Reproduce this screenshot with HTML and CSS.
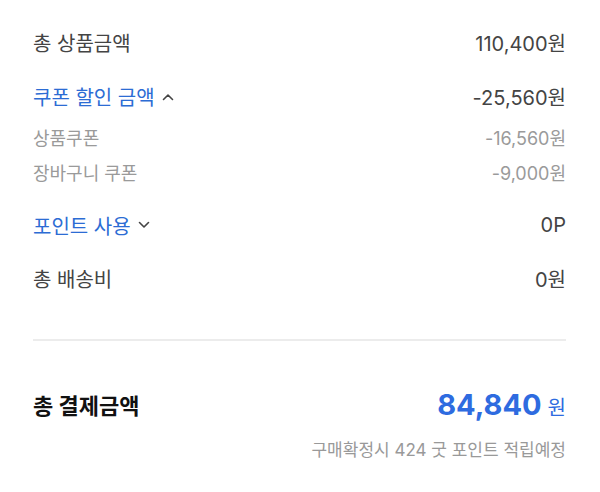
FILE: index.html
```html
<!DOCTYPE html>
<html lang="ko">
<head>
<meta charset="utf-8">
<link rel="stylesheet" href="styles.css">
</head>
<body>
<div class="summary">
  <div class="row main first"><span>총 상품금액</span><span>110,400원</span></div>
  <div class="row main coupon"><span class="toggle">쿠폰 할인 금액
    <svg class="chev" width="12" height="8" viewBox="0 0 12 8"><path d="M1.5 6.5 L6 2 L10.5 6.5" fill="none" stroke="#444" stroke-width="1.6" stroke-linecap="round" stroke-linejoin="round"/></svg></span><span>-25,560원</span></div>
  <div class="row sub sub1"><span>상품쿠폰</span><span>-16,560원</span></div>
  <div class="row sub sub2"><span>장바구니 쿠폰</span><span>-9,000원</span></div>
  <div class="row main points"><span class="toggle">포인트 사용
    <svg class="chev" width="12" height="8" viewBox="0 0 12 8"><path d="M1.5 1.5 L6 6 L10.5 1.5" fill="none" stroke="#444" stroke-width="1.6" stroke-linecap="round" stroke-linejoin="round"/></svg></span><span>0P</span></div>
  <div class="row main ship"><span>총 배송비</span><span>0원</span></div>
  <hr class="divider">
  <div class="row total"><span>총 결제금액</span><span class="amount"><b>84,840</b><span class="won">원</span></span></div>
  <div class="note">구매확정시 424 굿 포인트 적립예정</div>
</div>
</body>
</html>
```
FILE: styles.css
```css
html, body { margin: 0; padding: 0; background: #fff; }
body { font-family: "Inter", "Noto Sans CJK KR", sans-serif; color: #444; width: 600px; }
.summary { padding: 0 34px 0 33px; }
.row { display: flex; justify-content: space-between; align-items: center; }
.main { font-size: 20px; height: 28px; }
.first { margin-top: 28px; }
.coupon { margin-top: 26.5px; }
.toggle { color: #2c6cd4; display: flex; align-items: center; gap: 7px; }
.chev { display: block; }
.sub { font-size: 18px; color: #9a9a9a; height: 24px; }
.sub1 { margin-top: 14px; }
.sub2 { margin-top: 11.5px; }
.points { margin-top: 27px; }
.ship { margin-top: 25px; }
.divider { border: 0; border-top: 2px solid #ececec; margin: 47px 0 0; }
.total { margin-top: 45px; height: 36px; font-size: 22px; font-weight: 700; color: #111; }
.amount { display: flex; align-items: baseline; color: #2e6be0; }
.amount b { font-size: 29px; font-weight: 700; }
.won { font-size: 20px; font-weight: 400; margin-left: 6px; }
.note { text-align: right; font-size: 17px; color: #999; margin-top: 17px; line-height: 22px; }
```
